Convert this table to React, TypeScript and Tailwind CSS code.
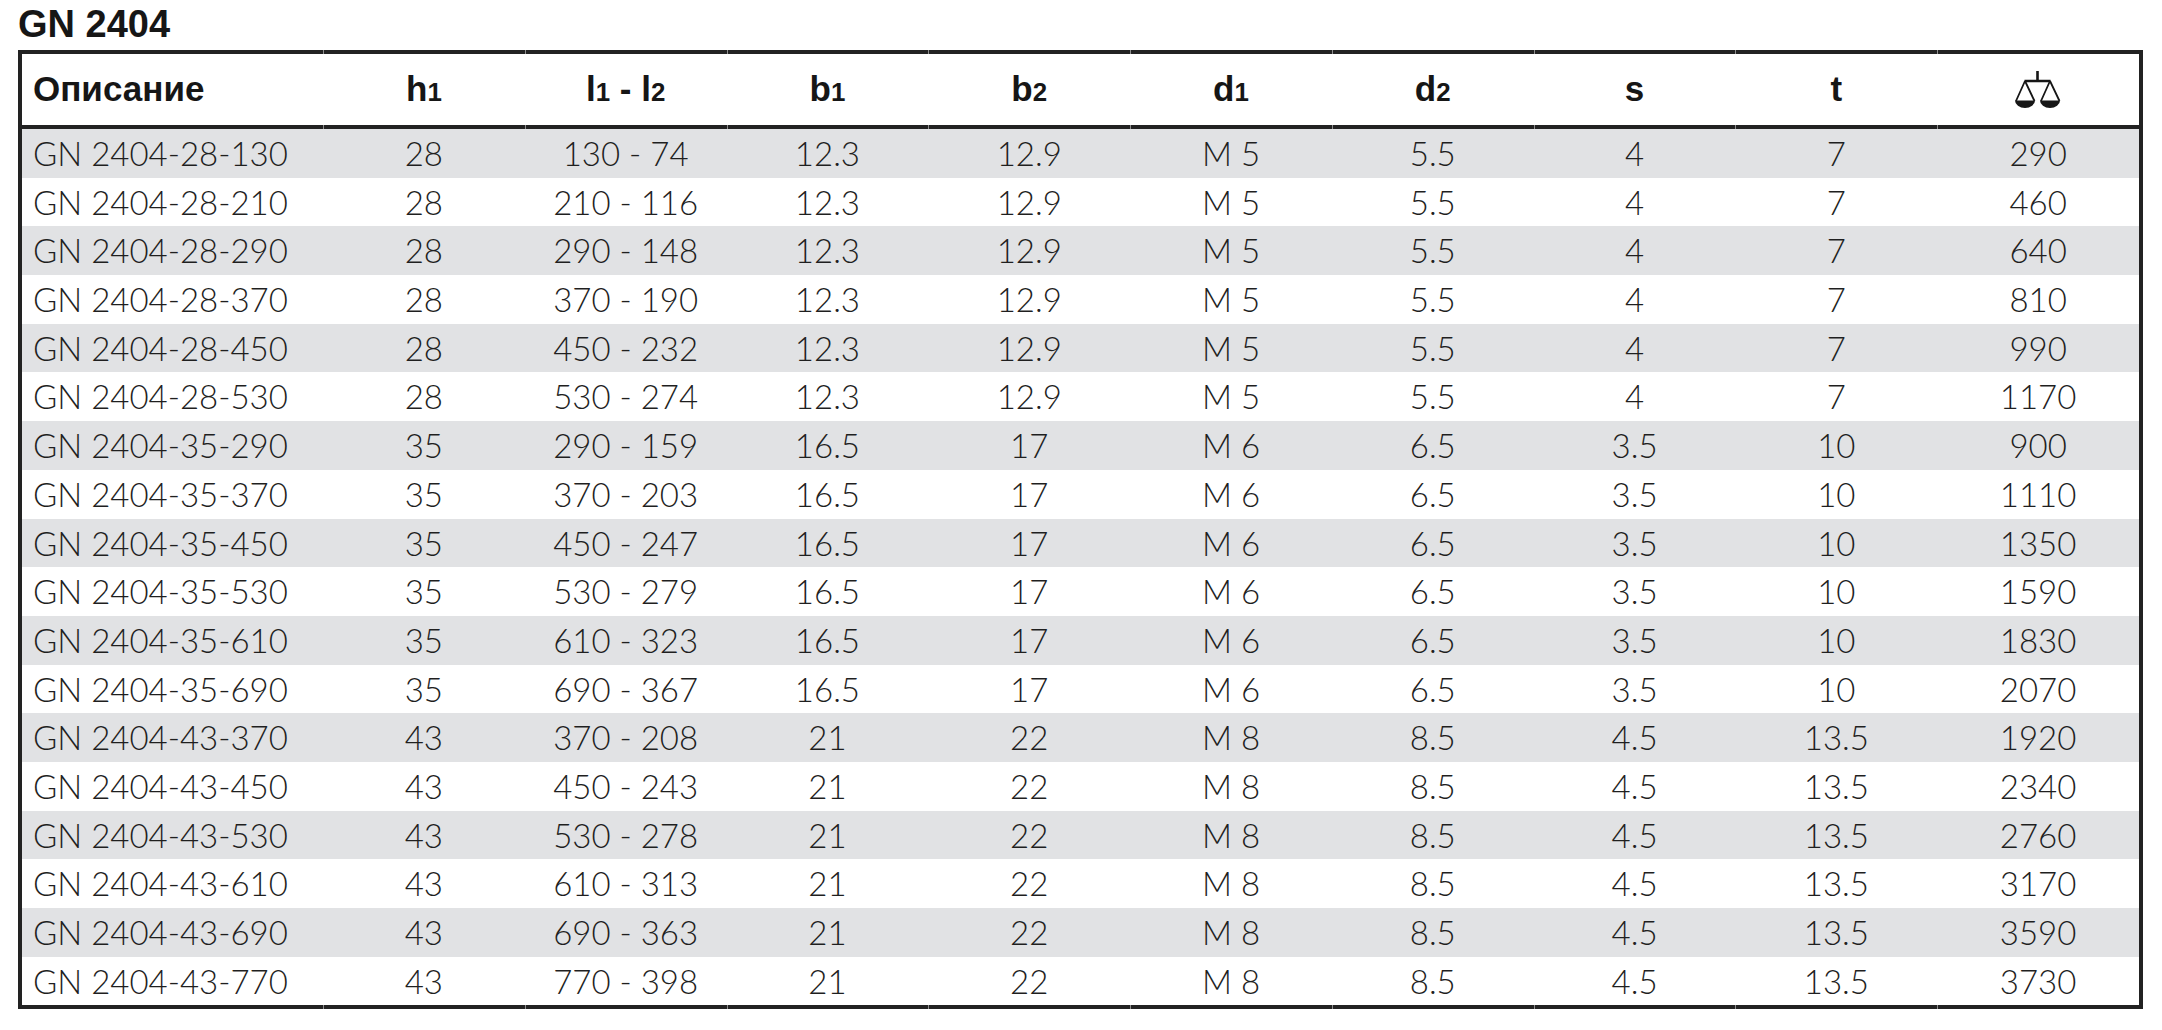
import React from "react";

type Row = [string, string, string, string, string, string, string, string, string, string];

const rows: Row[] = [
  ["GN 2404-28-130", "28", "130 - 74", "12.3", "12.9", "M 5", "5.5", "4", "7", "290"],
  ["GN 2404-28-210", "28", "210 - 116", "12.3", "12.9", "M 5", "5.5", "4", "7", "460"],
  ["GN 2404-28-290", "28", "290 - 148", "12.3", "12.9", "M 5", "5.5", "4", "7", "640"],
  ["GN 2404-28-370", "28", "370 - 190", "12.3", "12.9", "M 5", "5.5", "4", "7", "810"],
  ["GN 2404-28-450", "28", "450 - 232", "12.3", "12.9", "M 5", "5.5", "4", "7", "990"],
  ["GN 2404-28-530", "28", "530 - 274", "12.3", "12.9", "M 5", "5.5", "4", "7", "1170"],
  ["GN 2404-35-290", "35", "290 - 159", "16.5", "17", "M 6", "6.5", "3.5", "10", "900"],
  ["GN 2404-35-370", "35", "370 - 203", "16.5", "17", "M 6", "6.5", "3.5", "10", "1110"],
  ["GN 2404-35-450", "35", "450 - 247", "16.5", "17", "M 6", "6.5", "3.5", "10", "1350"],
  ["GN 2404-35-530", "35", "530 - 279", "16.5", "17", "M 6", "6.5", "3.5", "10", "1590"],
  ["GN 2404-35-610", "35", "610 - 323", "16.5", "17", "M 6", "6.5", "3.5", "10", "1830"],
  ["GN 2404-35-690", "35", "690 - 367", "16.5", "17", "M 6", "6.5", "3.5", "10", "2070"],
  ["GN 2404-43-370", "43", "370 - 208", "21", "22", "M 8", "8.5", "4.5", "13.5", "1920"],
  ["GN 2404-43-450", "43", "450 - 243", "21", "22", "M 8", "8.5", "4.5", "13.5", "2340"],
  ["GN 2404-43-530", "43", "530 - 278", "21", "22", "M 8", "8.5", "4.5", "13.5", "2760"],
  ["GN 2404-43-610", "43", "610 - 313", "21", "22", "M 8", "8.5", "4.5", "13.5", "3170"],
  ["GN 2404-43-690", "43", "690 - 363", "21", "22", "M 8", "8.5", "4.5", "13.5", "3590"],
  ["GN 2404-43-770", "43", "770 - 398", "21", "22", "M 8", "8.5", "4.5", "13.5", "3730"],
];

const cols = "grid grid-cols-[301px_repeat(9,minmax(0,1fr))]";

function Sub({ children }: { children: React.ReactNode }) {
  return <span className="text-[0.74em]">{children}</span>;
}

function Scale() {
  return (
    <svg width="50" height="42" viewBox="0 0 50 42" fill="none" stroke="#161616">
      <path d="M24.5 2V12M11.5 12H37.5" strokeWidth="2.6" />
      <path d="M12 12L3 32M12 12L21.5 32" strokeWidth="1.8" />
      <path d="M37 12L28 32M37 12L46.5 32" strokeWidth="1.8" />
      <path d="M2 31.5H22A10 7.5 0 0 1 2 31.5Z" fill="#161616" stroke="none" />
      <path d="M27 31.5H47A10 7.5 0 0 1 27 31.5Z" fill="#161616" stroke="none" />
    </svg>
  );
}

// thick rule with light ticks where the columns meet
function Rule() {
  return (
    <div className={`${cols} gap-x-px bg-[#8d8d8d] h-[4px]`}>
      {Array.from({ length: 10 }).map((_, i) => (
        <div key={i} className="bg-[#222222]" />
      ))}
    </div>
  );
}

const heads: React.ReactNode[] = [
  <>h<Sub>1</Sub></>,
  <>l<Sub>1</Sub> - l<Sub>2</Sub></>,
  <>b<Sub>1</Sub></>,
  <>b<Sub>2</Sub></>,
  <>d<Sub>1</Sub></>,
  <>d<Sub>2</Sub></>,
  <>s</>,
  <>t</>,
];

export default function App() {
  return (
    <div className="min-h-screen bg-white pl-[18px] pt-[5px] text-[#1f1f1f] font-['Liberation_Sans',Arial,sans-serif]">
      <h1 className="text-[38px] leading-[38px] font-bold text-[#161616] h-[45px]">GN 2404</h1>

      <div className="w-[2125px] border-x-4 border-[#222222]">
        <Rule />
        <div className={`${cols} h-[71px] items-center font-bold text-[#161616] text-[35px]`}>
          <div className="pl-[11px]">Описание</div>
          {heads.map((h, i) => (
            <div key={i} className="text-center">{h}</div>
          ))}
          <div className="flex justify-center">
            <Scale />
          </div>
        </div>
        <Rule />

        {rows.map((r, i) => (
          <div
            key={r[0]}
            className={`${cols} h-[48.7px] pb-[3px] items-center text-[33px] font-light font-['Lato','Roboto','Liberation_Sans',sans-serif] ${
              i % 2 === 0 ? "bg-[#e1e2e4]" : "bg-white"
            }`}
          >
            {r.map((c, j) => (
              <div key={j} className={j === 0 ? "pl-[11px]" : "text-center"}>
                {c}
              </div>
            ))}
          </div>
        ))}

        <Rule />
      </div>
    </div>
  );
}
